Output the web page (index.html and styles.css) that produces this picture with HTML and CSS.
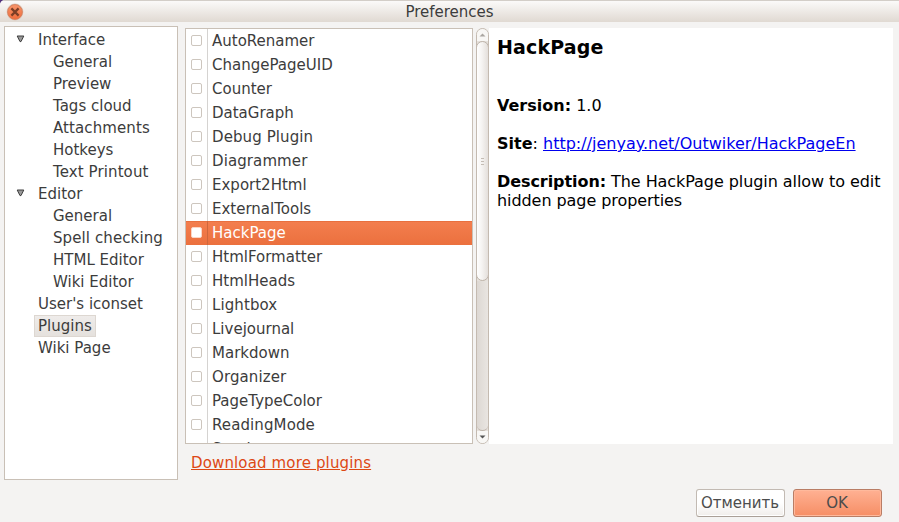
FILE: index.html
```html
<!DOCTYPE html>
<html lang="en">
<head>
<meta charset="utf-8">
<title>Preferences</title>
<link rel="stylesheet" href="styles.css">
</head>
<body>
<div class="window">
  <header class="titlebar">
    <svg class="close" width="18" height="18" viewBox="0 0 18 18">
      <defs><linearGradient id="cg" x1="0" y1="0" x2="0" y2="1"><stop offset="0" stop-color="#f8956a"/><stop offset="1" stop-color="#ef6c3c"/></linearGradient></defs>
      <circle cx="9" cy="9" r="8.4" fill="#dcc6b9"/>
      <circle cx="9" cy="9" r="7.4" fill="url(#cg)" stroke="#d37a55" stroke-width=".8"/>
      <path d="M5.4 5.4l7.2 7.2M12.6 5.4l-7.2 7.2" stroke="#7b3e26" stroke-width="2.2"/>
    </svg>
    <h1>Preferences</h1>
  </header>
  <main class="content">
    <nav class="tree">
      <ul>
        <li class="group"><svg class="arrow" width="9" height="8" viewBox="0 0 9 8"><path d="M1.2 1h6.6L5 6.6H4z" fill="#999" stroke="#3c3c3c"/></svg><span>Interface</span></li>
        <li class="child"><span>General</span></li>
        <li class="child"><span>Preview</span></li>
        <li class="child"><span>Tags cloud</span></li>
        <li class="child wide"><span>Attachments</span></li>
        <li class="child"><span>Hotkeys</span></li>
        <li class="child wide"><span>Text Printout</span></li>
        <li class="group"><svg class="arrow" width="9" height="8" viewBox="0 0 9 8"><path d="M1.2 1h6.6L5 6.6H4z" fill="#999" stroke="#3c3c3c"/></svg><span>Editor</span></li>
        <li class="child"><span>General</span></li>
        <li class="child wide"><span>Spell checking</span></li>
        <li class="child"><span>HTML Editor</span></li>
        <li class="child"><span>Wiki Editor</span></li>
        <li><span>User's iconset</span></li>
        <li><span class="current">Plugins</span></li>
        <li><span>Wiki Page</span></li>
      </ul>
    </nav>
    <section class="page">
      <div class="panes">
        <ul class="plugins">
          <li><i></i><span>AutoRenamer</span></li>
          <li><i></i><span>ChangePageUID</span></li>
          <li><i></i><span>Counter</span></li>
          <li><i></i><span>DataGraph</span></li>
          <li class="wide"><i></i><span>Debug Plugin</span></li>
          <li class="wide"><i></i><span>Diagrammer</span></li>
          <li><i></i><span>Export2Html</span></li>
          <li><i></i><span>ExternalTools</span></li>
          <li class="selected"><i></i><span>HackPage</span></li>
          <li><i></i><span>HtmlFormatter</span></li>
          <li><i></i><span>HtmlHeads</span></li>
          <li class="wide"><i></i><span>Lightbox</span></li>
          <li><i></i><span>Livejournal</span></li>
          <li><i></i><span>Markdown</span></li>
          <li class="wide"><i></i><span>Organizer</span></li>
          <li><i></i><span>PageTypeColor</span></li>
          <li class="wide"><i></i><span>ReadingMode</span></li>
          <li><i></i><span>Sessions</span></li>
        </ul>
        <div class="scrollbar">
          <div class="step up"><svg width="7" height="4" viewBox="0 0 7 4"><path d="M.5 3.6L3.5 .4l3 3.2z" fill="#aaa6a1"/></svg></div>
          <div class="thumb"><b></b><b></b><b></b></div>
          <div class="trough"></div>
          <div class="step down"><svg width="7" height="4" viewBox="0 0 7 4"><path d="M.5 .4l3 3.2 3-3.2z" fill="#555"/></svg></div>
        </div>
        <article class="info">
          <h2>HackPage</h2>
          <p><strong>Version:</strong> 1.0</p>
          <p><strong>Site</strong>: <a href="#">http://jenyay.net/Outwiker/HackPageEn</a></p>
          <p class="description"><strong>Description:</strong> The HackPage plugin allow to edit<br>hidden page properties</p>
        </article>
      </div>
      <a class="download" href="#">Download more plugins</a>
    </section>
  </main>
  <footer class="actions">
    <button>Отменить</button>
    <button class="primary">OK</button>
  </footer>
</div>
</body>
</html>
```

FILE: styles.css
```css
* { box-sizing: border-box; }
body { margin: 0; background: #50307a; font: 15px/22px "DejaVu Sans", sans-serif; color: #3c3c3c; }
ul { list-style: none; margin: 0; padding: 0; }
.window { width: 899px; height: 522px; display: flex; flex-direction: column; background: #f4f3f2; border-radius: 5px 0 0 0; overflow: hidden; }
.titlebar { height: 22px; flex: none; display: grid; grid-template-columns: 24px 1fr 24px; align-items: center; border-top: 1px solid #d3cec8; background: linear-gradient(#fbfaf9, #e0d9d2); }
.close { display: block; margin: -1px 0 0 6px; }
h1 { margin: 0; padding-top: 1px; text-align: center; font-size: 15px; font-weight: 400; line-height: 21px; }
.content { display: flex; height: 458px; padding: 4px 6px 0 4px; gap: 7px; }
.tree { width: 174px; height: 454px; background: #fff; border: 1px solid #c9c0b6; padding-top: 2px; }
.tree li { height: 22px; display: flex; align-items: center; padding-left: 29px; }
.tree span { padding: 0 4px; line-height: 22px; }
.tree .child { padding-left: 44px; }
.tree .group { padding-left: 11px; }
.wide { letter-spacing: .1px; }
.arrow { margin: -2px 9px 0 0; }
.tree .current { height: 22px; line-height: 20px; padding: 0 3px; border: 1px solid #ddd7d1; background: linear-gradient(#efecea, #e5e1dd); }
.page { flex: 1; padding-top: 2px; }
.panes { display: flex; height: 416px; }
.plugins { width: 288px; height: 416px; border: 1px solid #c9c0b6; background: #fff; overflow: hidden; }
.plugins li { display: flex; align-items: flex-start; height: 24px; }
.plugins i { width: 11px; height: 11px; margin: 6px 5px 0; border: 1px solid #cdc6be; border-radius: 2px; background: #fff; }
.plugins span { flex: 1; height: 24px; line-height: 24px; border-left: 1px solid #d5d3d1; padding-left: 4px; }
.plugins .selected { color: #fff; background: linear-gradient(#e8703f 1px, #f37e4e 1px, #eb703e); }
.plugins .selected i { border-color: #fbd6c6; }
.plugins .selected span { border-color: #cf673c; }
.scrollbar { width: 13px; height: 416px; margin-left: 3px; border: 1px solid #c4bab0; border-radius: 7px; background: #e6e1dc; display: flex; flex-direction: column; overflow: hidden; }
.step { height: 12px; flex: none; display: flex; align-items: center; justify-content: center; background: #f8f7f5; }
.thumb { height: 240px; flex: none; margin: 0 -1px; border: 1px solid #bdb3a9; border-radius: 7px; background: linear-gradient(90deg, #fff, #f5f3f1 45%, #e4dfdb); display: flex; flex-direction: column; justify-content: center; align-items: center; gap: 2px; }
.thumb b { width: 3px; height: 1px; background: #c4bcb4; }
.trough { flex: 1; border-radius: 0 0 6px 6px; border-bottom: 1px solid #bdb3a9; background: linear-gradient(90deg, #ddd8d3, #e9e5e1); }
.info { flex: 1; background: #fff; color: #000; padding: 8px; font-size: 16px; line-height: 19px; white-space: nowrap; }
h2 { margin: 0 0 38px; font-size: 19px; line-height: 23px; letter-spacing: .15px; }
p { margin: 0 0 19px; }
.info a { color: #00e; }
h2 + p { margin-top: -1px; }
.description { letter-spacing: -.07px; }
.download { display: inline-block; margin: 8px 0 0 6px; color: #dd4814; letter-spacing: .14px; }
.actions { display: flex; justify-content: flex-end; gap: 8px; padding: 9px 17px 0 0; }
button { width: 89px; height: 28px; padding: 0 1px 0 0; border: 1px solid #c2bab3; border-bottom-color: #aaa097; border-radius: 3px; font: inherit; color: #4c4c4c; background: linear-gradient(#fff 50%, #f0edea); box-shadow: inset 0 0 0 1px #fff; }
.primary { border-color: #b97d65; background: linear-gradient(#ffb193, #f68e65); box-shadow: inset 0 0 0 1px #ffb99c; }
```
